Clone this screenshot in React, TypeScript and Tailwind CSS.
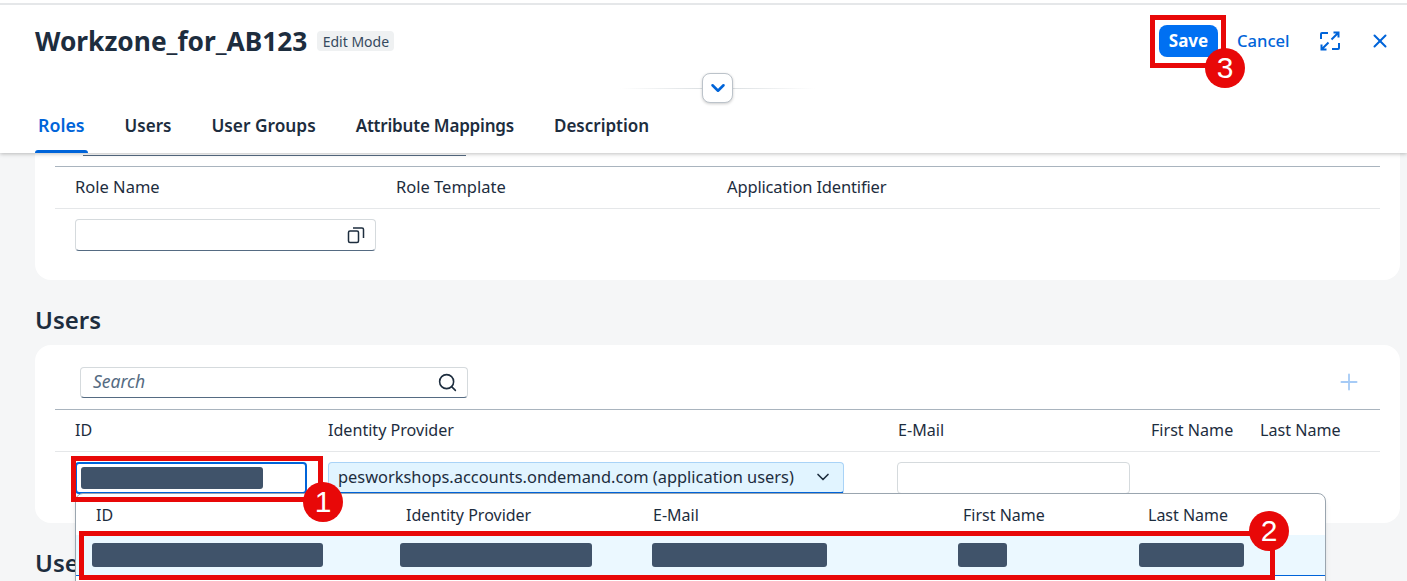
import { ChevronDown, Plus, Search, X } from "lucide-react"

const tabs = [
  { label: "Roles", className: "text-[17.8px] text-[#0064d9]" },
  { label: "Users", className: "text-[17px]" },
  { label: "User Groups", className: "text-[17.3px]" },
  { label: "Attribute Mappings", className: "text-[17px] tracking-[-0.2px]" },
  { label: "Description", className: "text-[17px]" },
]

function Redacted({ className }: { className: string }) {
  return <div className={`h-6 rounded-[3px] bg-[#40536a] ${className}`} />
}

function Marker({ n, className }: { n: number; className: string }) {
  return (
    <div className={`absolute z-40 flex h-10 w-10 items-center justify-center rounded-full bg-[#e80808] font-['Liberation_Sans',sans-serif] text-[30px] leading-none text-white ${className}`}>
      {n}
    </div>
  )
}

export default function App() {
  return (
    <div className="relative h-[581px] w-[1407px] overflow-hidden bg-[#f5f6f7] font-['Noto_Sans',sans-serif] text-[16px] text-[#1d2d3e]">
      {/* object page header */}
      <header className="relative z-10 h-[153px] bg-white pt-[3px] shadow-[0_1px_4px_rgba(0,0,0,0.25)]">
        <div className="h-0.5 bg-[#e5e7e9]" />
        <div className="flex h-[68px] items-center pl-[35px] pr-4 pt-[4px]">
          <h1 className="text-[26.3px] font-bold leading-none">Workzone_for_AB123</h1>
          <span className="ml-[10px] flex h-5 w-[77px] items-center justify-center rounded bg-[#eff1f2] text-[14px] text-[#354a5f]">Edit Mode</span>
          <button className="ml-auto h-8 w-[59px] rounded-lg bg-[#0070f2] text-[17px] font-bold text-white">Save</button>
          <span className="ml-[19px] w-[53px] whitespace-nowrap text-[16.6px] font-medium text-[#0064d9]">Cancel</span>
          <svg viewBox="0 0 20 20" className="ml-[30px] h-5 w-5" fill="none" stroke="#0064d9" strokeWidth="2">
            <path d="M1 8V3a1 1 0 0 1 1-1h6M19 12v5a1 1 0 0 1-1 1h-6" />
            <path d="M11.5 8.5l7-7M13.5 1.5h5v5M8.5 11.5l-7 7M1.5 13.5v5h5" />
          </svg>
          <X className="ml-[29px] h-[22px] w-[22px] text-[#0064d9]" strokeWidth={2.2} />
        </div>
        <div className="relative h-[30px]">
          <div className="absolute left-[620px] top-[15px] h-px w-[195px] bg-gradient-to-r from-transparent via-[#d5dadd] to-transparent" />
          <button className="absolute left-[702px] top-0 flex h-[30px] w-[31px] items-center justify-center rounded-lg border border-[#bcc3ca] bg-white shadow-[0_1px_3px_rgba(0,0,0,0.2)]">
            <ChevronDown className="h-[22px] w-[22px] text-[#0064d9]" strokeWidth={2.8} />
          </button>
        </div>
        <nav className="flex h-[50px] items-center gap-10 pb-[5px] pl-[38px]">
          {tabs.map((t) => (
            <span key={t.label} className={`font-semibold ${t.className}`}>{t.label}</span>
          ))}
        </nav>
        <div className="absolute bottom-0 left-[35px] h-[3px] w-[53px] rounded-t bg-[#0064d9]" />
      </header>

      <main className="pl-[35px] pr-[7px]">
        {/* roles */}
        <section className="h-[127px] rounded-b-2xl bg-white px-5">
          <div className="ml-[28px] h-[3px] w-[383px] border-b border-[#556b82]" />
          <div className="mt-[10px] grid h-[43px] grid-cols-[321px_331px_1fr] items-center border-y border-t-[#a9b4be] border-b-[#e5e7e9] pl-5 text-[16.5px]">
            <span>Role Name</span>
            <span>Role Template</span>
            <span className="tracking-[-0.15px]">Application Identifier</span>
          </div>
          <div className="ml-5 mt-[10px] flex h-8 w-[301px] items-center justify-end rounded border border-[#d5dadd] border-b-[#556b82] pr-[10px]">
            <svg viewBox="0 0 18 18" className="h-[18px] w-[18px]" fill="none" stroke="#1d2d3e" strokeWidth="1.5">
              <rect x="1.5" y="5" width="10" height="11.5" rx="1.5" />
              <path d="M6 2h9a1.5 1.5 0 0 1 1.5 1.5V12" />
            </svg>
          </div>
        </section>

        <h2 className="flex h-[65px] items-center pt-[15px] text-[24px] font-semibold">Users</h2>

        {/* users */}
        <section className="h-[178px] rounded-2xl bg-white px-5 pt-[22px]">
          <div className="flex items-center pl-[25px] pr-[18px]">
            <div className="flex h-[31px] w-[388px] items-center justify-between rounded border border-[#d5dadd] border-b-[#556b82] pb-[2px] pl-3 pr-[9px]">
              <span className="text-[17.5px] italic text-[#556b82]">Search</span>
              <Search className="mt-[2px] h-[21px] w-[21px]" strokeWidth={1.8} />
            </div>
            <Plus className="-mt-[1px] ml-auto h-[26px] w-[26px] text-[#a6cbf6]" strokeWidth={1.7} />
          </div>
          <div className="mt-[11px] grid h-[43px] grid-cols-[253px_570px_253px_109px_1fr] items-center border-y border-t-[#a9b4be] border-b-[#e5e7e9] pb-[1px] pl-5 text-[16.1px]">
            <span>ID</span>
            <span>Identity Provider</span>
            <span>E-Mail</span>
            <span>First Name</span>
            <span>Last Name</span>
          </div>
          <div className="mt-[10px] flex pl-5">
            <div className="flex h-8 w-[232px] items-center rounded border-2 border-[#0064d9] pl-1">
              <Redacted className="h-[22px] w-[182px]" />
            </div>
            <div className="ml-[21px] flex h-8 w-[516px] items-center justify-between rounded border border-[#a9d3f7] border-b-2 border-b-[#0064d9] bg-[#e1f4ff] pb-[1px] pl-[9px] pr-[10px]">
              <span className="text-[16.4px]">pesworkshops.accounts.ondemand.com (application users)</span>
              <ChevronDown className="h-5 w-5" strokeWidth={2} />
            </div>
            <div className="ml-[53px] h-8 w-[233px] rounded border border-[#d5dadd]" />
          </div>
        </section>

        <h2 className="flex h-[65px] items-center pt-[15px] text-[24px] font-semibold">Users</h2>
      </main>

      {/* suggestion popover */}
      <div className="absolute left-[75px] top-[493px] z-20 h-[100px] w-[1251px] rounded-lg border border-[#9aa5af] bg-white shadow-md">
        <div className="flex h-[41px] items-center">
          <span className="ml-5 w-[310px]">ID</span>
          <span className="w-[247px]">Identity Provider</span>
          <span className="w-[310px]">E-Mail</span>
          <span className="w-[185px]">First Name</span>
          <span>Last Name</span>
        </div>
        <div className="flex h-[41px] items-center border-b border-[#0064d9] bg-[#ebf8ff] pl-4">
          <Redacted className="w-[231px]" />
          <Redacted className="ml-[77px] w-[192px]" />
          <Redacted className="ml-[60px] w-[175px]" />
          <Redacted className="ml-[131px] w-[49px]" />
          <Redacted className="ml-[132px] w-[105px]" />
        </div>
      </div>

      {/* tutorial annotations */}
      <div className="absolute left-[1150px] top-[15px] z-30 h-[53px] w-[76px] border-[5px] border-[#e80808]" />
      <div className="absolute left-[71px] top-[456px] z-30 h-[46px] w-[252px] border-[5px] border-[#e80808]" />
      <div className="absolute left-[79px] top-[531px] z-30 h-[49px] w-[1196px] border-[5px] border-[#e80808]" />
      <Marker n={1} className="left-[303px] top-[482px]" />
      <Marker n={2} className="left-[1249px] top-[511px]" />
      <Marker n={3} className="left-[1205px] top-[48px]" />
    </div>
  )
}
